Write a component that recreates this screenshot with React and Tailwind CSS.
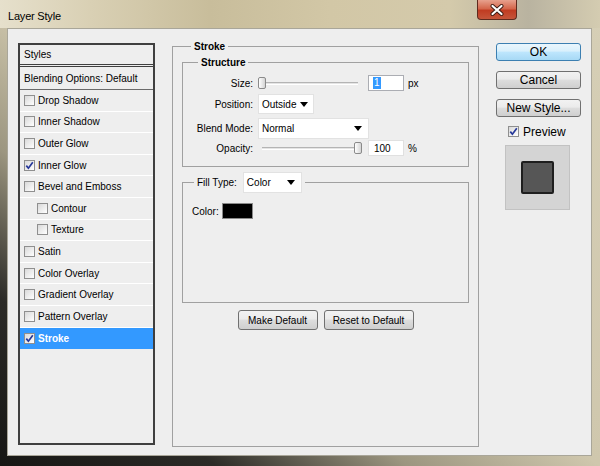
import React from 'react';

function Check({ checked }) {
  return (
    <span className="w-[11px] h-[11px] shrink-0 border border-[#8f8f8f] bg-[linear-gradient(135deg,#d9d9d9,#ffffff)] flex items-center justify-center">
      {checked && (
        <svg width="9" height="9" viewBox="0 0 9 9">
          <path d="M1.3 4.6 L3.4 7.2 L7.8 1.2" stroke="#26389a" strokeWidth="1.7" fill="none" />
        </svg>
      )}
    </span>
  );
}

function Caret() {
  return (
    <svg width="8" height="5" viewBox="0 0 8 5" className="shrink-0">
      <path d="M0 0 H8 L4 5 Z" fill="#000" />
    </svg>
  );
}

function Slider({ at }) {
  return (
    <div className="relative w-[104px] h-[14px] flex items-center">
      <div className="mx-[4px] flex-1 h-[3px] border-t border-[#b4b4b4] bg-[#e4e4e4] border-b border-b-[#ffffff]" />
      <div
        className={`absolute top-[1px] w-[8px] h-[12px] rounded-[2px] border border-[#8a8a8a] bg-[linear-gradient(to_right,#ffffff,#d4d4d4)] ${at === 'end' ? 'right-0' : 'left-0'}`}
      />
    </div>
  );
}

const rows = [
  { name: 'Drop Shadow' },
  { name: 'Inner Shadow' },
  { name: 'Outer Glow' },
  { name: 'Inner Glow', on: true },
  { name: 'Bevel and Emboss' },
  { name: 'Contour', sub: true },
  { name: 'Texture', sub: true },
  { name: 'Satin' },
  { name: 'Color Overlay' },
  { name: 'Gradient Overlay' },
  { name: 'Pattern Overlay' },
];

const btn =
  'rounded-[3px] border border-[#707070] bg-[linear-gradient(to_bottom,#f2f2f2_0%,#ebebeb_45%,#dddddd_50%,#cfcfcf_100%)] flex items-center justify-center';

export default function App() {
  return (
    <div className="w-[600px] h-[466px] overflow-hidden bg-[linear-gradient(to_top_right,#161614_0%,#2c2b27_18%,#9c9680_34%,#cfc7ad_50%,#d6cfb6_100%)] font-['Liberation_Sans',Arial,sans-serif] text-black">
      {/* title bar */}
      <div className="h-[28px] flex bg-[linear-gradient(to_right,#e6e0cc_0%,#d9d0b4_15%,#c8bd9b_35%,#d2c7a6_55%,#d4caab_75%,#b9b3a0_88%,#d4ccb1_100%)]">
        <div className="pl-[8px] pt-[8px] text-[11px] tracking-[-0.2px]">Layer Style</div>
        <div className="ml-auto mr-[83px] w-[40px] h-[20px] rounded-b-[4px] border border-t-0 border-[#5e2a1e] bg-[linear-gradient(to_bottom,#e7a18d_0%,#d4674c_45%,#c03c22_55%,#c5553a_100%)] flex items-center justify-center">
          <svg width="14" height="12" viewBox="0 0 14 12">
            <path d="M2.5 2 L11.5 10 M11.5 2 L2.5 10" stroke="#3a1a12" strokeWidth="4" strokeLinecap="round" />
            <path d="M2.5 2 L11.5 10 M11.5 2 L2.5 10" stroke="#ffffff" strokeWidth="2.2" strokeLinecap="round" />
          </svg>
        </div>
      </div>

      {/* client area */}
      <div className="ml-[7px] w-[585px] h-[428px] border border-[#a9a699] bg-[#eeeeee] flex items-start text-[10px]">
        {/* styles list */}
        <div className="ml-[10px] mt-[14px] w-[137px] h-[402px] border-2 border-[#3f3f3f] bg-[#eeeeee] flex flex-col">
          <div className="h-[22px] border-b-[3px] border-double border-[#3f3f3f] flex items-center pl-[4px]">Styles</div>
          <div className="h-[23px] border-b border-[#6a6a6a] flex items-center pl-[4px]">Blending Options: Default</div>
          {rows.map((r) => (
            <div
              key={r.name}
              className={`h-[21.6px] border-b border-[#ffffff] flex items-center gap-[3px] ${r.sub ? 'pl-[17px]' : 'pl-[4px]'}`}
            >
              <Check checked={r.on} />
              <span>{r.name}</span>
            </div>
          ))}
          <div className="h-[21.6px] bg-[#3399ff] text-white font-bold flex items-center gap-[3px] pl-[4px]">
            <Check checked />
            <span>Stroke</span>
          </div>
        </div>

        {/* stroke panel */}
        <fieldset className="ml-[17px] mt-[11px] w-[307px] h-[407px] border border-[#a0a0a0] px-[9px]">
          <legend className="ml-[9px] px-[3px] font-bold leading-[13px]">Stroke</legend>

          <fieldset className="mt-[3px] border border-[#a0a0a0] pt-[6px] pb-[10px]">
            <legend className="ml-[15px] px-[3px] font-bold leading-[13px]">Structure</legend>
            <div className="flex items-center h-[16px]">
              <span className="w-[70px] text-right">Size:</span>
              <div className="ml-[5px]"><Slider at="start" /></div>
              <div className="ml-[6px] w-[36px] h-[16px] bg-white border border-[#abadb3] flex items-center pl-[4px]">
                <span className="bg-[#3399ff] text-white px-[1px] leading-[12px]">1</span>
              </div>
              <span className="ml-[4px]">px</span>
            </div>
            <div className="flex items-center h-[20px] mt-[3px]">
              <span className="w-[70px] text-right">Position:</span>
              <div className="ml-[5px] w-[56px] h-[20px] bg-white border border-[#e2e2e2] flex items-center justify-between pl-[3px] pr-[5px]">
                <span>Outside</span>
                <Caret />
              </div>
            </div>
            <div className="flex items-center h-[21px] mt-[4px]">
              <span className="w-[70px] text-right">Blend Mode:</span>
              <div className="ml-[5px] w-[111px] h-[21px] bg-white border border-[#e2e2e2] flex items-center justify-between pl-[3px] pr-[6px]">
                <span>Normal</span>
                <Caret />
              </div>
            </div>
            <div className="flex items-center h-[16px] mt-[1px]">
              <span className="w-[70px] text-right">Opacity:</span>
              <div className="ml-[5px]"><Slider at="end" /></div>
              <div className="ml-[6px] w-[36px] h-[16px] bg-white border border-[#e0e0e0] flex items-center pl-[5px]">100</div>
              <span className="ml-[4px]">%</span>
            </div>
          </fieldset>

          <fieldset className="mt-[5px] h-[131px] border border-[#a0a0a0]">
            <legend className="ml-[11px] px-[3px] flex items-center leading-[13px]">
              <span>Fill Type:</span>
              <div className="ml-[6px] w-[59px] h-[21px] bg-white border border-[#e2e2e2] flex items-center justify-between pl-[3px] pr-[6px]">
                <span>Color</span>
                <Caret />
              </div>
            </legend>
            <div className="mt-[10px] pl-[9px] flex items-center">
              <span>Color:</span>
              <div className="ml-[3px] w-[31px] h-[16px] bg-black border border-[#8a8a8a]" />
            </div>
          </fieldset>

          <div className="mt-[7px] flex justify-center gap-[6px]">
            <div className={`${btn} w-[80px] h-[20px]`}>Make Default</div>
            <div className={`${btn} w-[90px] h-[20px]`}>Reset to Default</div>
          </div>
        </fieldset>

        {/* right column */}
        <div className="ml-[17px] mt-[14px] w-[85px] flex flex-col text-[12px]">
          <div className="h-[18px] rounded-[3px] border border-[#3c7fb1] bg-[linear-gradient(to_bottom,#eaf6fd_0%,#d9f0fc_45%,#bee6fd_50%,#a7d9f5_100%)] flex items-center justify-center">OK</div>
          <div className={`${btn} h-[18px] mt-[10px]`}>Cancel</div>
          <div className={`${btn} h-[18px] mt-[10px]`}>New Style...</div>
          <div className="mt-[8px] ml-[12px] flex items-center gap-[4px] h-[13px]">
            <Check checked />
            <span>Preview</span>
          </div>
          <div className="mt-[7px] ml-[9px] w-[65px] h-[65px] bg-[#d4d4d4] border border-[#c2c2c2] flex items-center justify-center">
            <div className="w-[33px] h-[33px] rounded-[2px] bg-[#565656] border-2 border-[#1e1e1e]" />
          </div>
        </div>
      </div>
    </div>
  );
}
